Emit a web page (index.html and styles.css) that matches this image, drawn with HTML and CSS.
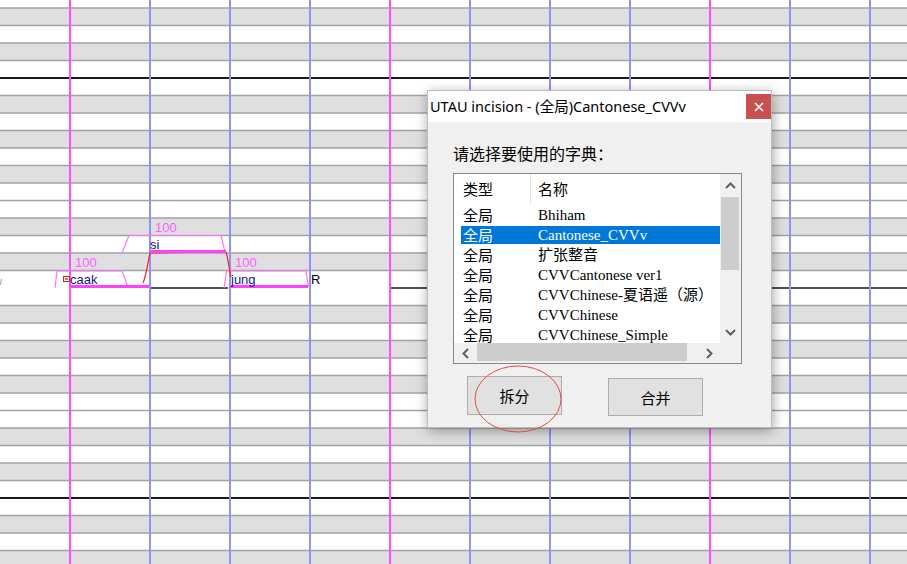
FILE: index.html
```
<!DOCTYPE html>
<html>
<head>
<meta charset="utf-8">
<link rel="stylesheet" href="styles.css">
</head>
<body>
<div class="desktop">
  <svg class="roll" width="907" height="564" viewBox="0 0 907 564">
    <rect x="0" y="0" width="907" height="564" fill="#ffffff"/>
    <g fill="#dfdfdf">
      <rect x="0" y="8" width="907" height="17.5"/>
      <rect x="0" y="43" width="907" height="17.5"/>
      <rect x="0" y="95.5" width="907" height="17.5"/>
      <rect x="0" y="130.5" width="907" height="17.5"/>
      <rect x="0" y="165.5" width="907" height="17.5"/>
      <rect x="0" y="218" width="907" height="17.5"/>
      <rect x="0" y="253" width="907" height="17.5"/>
      <rect x="0" y="305.5" width="907" height="17.5"/>
      <rect x="0" y="340.5" width="907" height="17.5"/>
      <rect x="0" y="375.5" width="907" height="17.5"/>
      <rect x="0" y="428" width="907" height="17.5"/>
      <rect x="0" y="463" width="907" height="17.5"/>
      <rect x="0" y="515.5" width="907" height="17.5"/>
      <rect x="0" y="550.5" width="907" height="17.5"/>
    </g>
    <path stroke="#a2a2a2" stroke-width="1.5" fill="none" d="M0 8H907M0 25.5H907M0 43H907M0 60.5H907M0 95.5H907M0 113H907M0 130.5H907M0 148H907M0 165.5H907M0 183H907M0 200.5H907M0 218H907M0 235.5H907M0 253H907M0 270.5H907M0 305.5H907M0 323H907M0 340.5H907M0 358H907M0 375.5H907M0 393H907M0 410.5H907M0 428H907M0 445.5H907M0 463H907M0 480.5H907M0 515.5H907M0 533H907M0 550.5H907"/>
    <path stroke="#1a1a1a" stroke-width="2" fill="none" d="M0 78H907M0 498H907"/>
    <path stroke="#1a1a1a" stroke-width="1.5" fill="none" d="M149 288H228M390 288H907"/>
    <g fill="#9090ff">
      <rect x="149" y="0" width="2" height="564"/>
      <rect x="229" y="0" width="2" height="564"/>
      <rect x="309" y="0" width="2" height="564"/>
      <rect x="469" y="0" width="2" height="564"/>
      <rect x="549" y="0" width="2" height="564"/>
      <rect x="629" y="0" width="2" height="564"/>
      <rect x="789" y="0" width="2" height="564"/>
      <rect x="869" y="0" width="2" height="564"/>
    </g>
    <g fill="#ff50ff">
      <rect x="69" y="0" width="2" height="564"/>
      <rect x="389" y="0" width="2" height="564"/>
      <rect x="709" y="0" width="2" height="564"/>
    </g>
    <path stroke="#9a9a9a" stroke-width="1" fill="none" d="M1.5 279L0.5 285"/>

    <g fill="none" stroke="#ff70ff" stroke-width="1.2">
      <polyline points="55,288 57,271 122,271 128,287"/>
      <polyline points="122,253 129,235.5 221,235.5 225,252"/>
      <polyline points="224,288 226.5,271 306,271 308.5,287"/>
    </g>
    <path d="M143 283 C146 276 148 262 150 253 L226 252 C228 258 229 268 231 277" stroke="#f02020" stroke-width="1.2" fill="none"/>
    <g fill="#ff40ff">
      <rect x="70" y="285" width="79" height="3"/>
      <rect x="150" y="250" width="76" height="3"/>
      <rect x="230" y="285" width="78" height="3"/>
    </g>
    <g class="vel">
      <text x="75" y="267">100</text>
      <text x="155" y="232">100</text>
      <text x="235" y="267">100</text>
    </g>
    <rect x="63.5" y="276.5" width="6" height="5" fill="none" stroke="#e02020" stroke-width="1"/>
    <rect x="65" y="278" width="3" height="2" fill="#ff6060"/>
    <g class="lyric">
      <text x="70" y="283.5">caak</text>
      <text x="150" y="248.5">si</text>
      <text x="231" y="283.5">jung</text>
    </g>
    <text class="rest" x="311" y="283.5">R</text>
  </svg>

  <div class="dialog">
    <div class="titlebar">
      <span class="title">UTAU incision - (全局)Cantonese_CVVv</span>
      <div class="close">
        <svg width="10" height="10" viewBox="0 0 10 10"><path d="M1 1L9 9M9 1L1 9" stroke="#fff" stroke-width="1.6"/></svg>
      </div>
    </div>
    <div class="body">
      <div class="prompt">请选择要使用的字典：</div>
      <div class="list">
        <div class="view">
          <div class="head"><span class="c1">类型</span><span class="c2">名称</span></div>
          <div class="item"><span class="c1">全局</span><span class="c2">Bhiham</span></div>
          <div class="item sel"><span class="c1">全局</span><span class="c2">Cantonese_CVVv</span></div>
          <div class="item"><span class="c1">全局</span><span class="c2">扩张整音</span></div>
          <div class="item"><span class="c1">全局</span><span class="c2">CVVCantonese ver1</span></div>
          <div class="item"><span class="c1">全局</span><span class="c2">CVVChinese-夏语遥（源）</span></div>
          <div class="item"><span class="c1">全局</span><span class="c2">CVVChinese</span></div>
          <div class="item"><span class="c1">全局</span><span class="c2">CVVChinese_Simple</span></div>
        </div>
        <div class="vscroll">
          <div class="arrow"><svg width="11" height="7" viewBox="0 0 11 7"><path d="M1 6L5.5 1.5L10 6" stroke="#606060" stroke-width="2" fill="none"/></svg></div>
          <div class="vthumb"></div>
          <div class="fill"></div>
          <div class="arrow"><svg width="11" height="7" viewBox="0 0 11 7"><path d="M1 1L5.5 5.5L10 1" stroke="#606060" stroke-width="2" fill="none"/></svg></div>
        </div>
        <div class="hscroll">
          <div class="harrow left"><svg width="7" height="11" viewBox="0 0 7 11"><path d="M6 1L1.5 5.5L6 10" stroke="#606060" stroke-width="2" fill="none"/></svg></div>
          <div class="hthumb"></div>
          <div class="fill"></div>
          <div class="harrow right"><svg width="7" height="11" viewBox="0 0 7 11"><path d="M1 1L5.5 5.5L1 10" stroke="#606060" stroke-width="2" fill="none"/></svg></div>
        </div>
        <div class="corner"></div>
      </div>
      <div class="buttons">
        <div class="btn">拆分</div>
        <div class="btn second">合并</div>
      </div>
    </div>
  </div>

  <svg class="circle" width="90" height="70" viewBox="0 0 90 70">
    <ellipse cx="44" cy="34" rx="43" ry="33" fill="none" stroke="#e84848" stroke-width="1"/>
  </svg>
</div>
</body>
</html>
```
FILE: styles.css
```
body {
  margin: 0;
}

.desktop {
  position: relative;
  width: 907px;
  height: 564px;
  overflow: hidden;
  background: #fff;
}

.roll {
  display: block;
}

.roll text {
  font-family: "Liberation Sans", Arial, sans-serif;
  font-size: 13px;
}

.roll .vel text {
  fill: #ff5cff;
}

.roll .lyric text {
  fill: #16168c;
}

.roll .rest {
  fill: #000;
}

.dialog {
  position: absolute;
  left: 427px;
  top: 90px;
  width: 345px;
  height: 338px;
  box-sizing: border-box;
  border: 1px solid #bcbcbc;
  background: #f0f0f0;
  box-shadow: 1px 3px 12px rgba(0, 0, 0, 0.35);
  display: flex;
  flex-direction: column;
}

.titlebar {
  height: 31px;
  flex: none;
  background: #fff;
  display: flex;
  justify-content: space-between;
  align-items: flex-start;
}

.title {
  padding-left: 2px;
  line-height: 31px;
  font-family: "Noto Sans", "Noto Sans CJK SC", sans-serif;
  font-size: 14.5px;
  color: #000;
  white-space: nowrap;
}

.close {
  width: 25px;
  height: 25px;
  margin-top: 3px;
  background: #c75050;
  display: flex;
  align-items: center;
  justify-content: center;
}

.close svg {
  display: block;
}

.body {
  flex: 1;
  padding: 21px 0 0 25px;
}

.prompt {
  height: 20px;
  line-height: 20px;
  font-family: "Noto Sans CJK SC", sans-serif;
  font-size: 16px;
  color: #000;
}

.list {
  margin-top: 10px;
  width: 289px;
  height: 191px;
  box-sizing: border-box;
  border: 1px solid #828790;
  background: #fff;
  display: grid;
  grid-template-columns: 1fr 21px;
  grid-template-rows: 1fr 20px;
}

.view {
  overflow: hidden;
  font-family: "Liberation Serif", "Noto Sans CJK SC", serif;
  font-size: 15px;
  color: #000;
}

.head {
  height: 30px;
  display: flex;
  align-items: stretch;
}

.head .c1 {
  width: 77px;
  box-sizing: border-box;
  padding-left: 9px;
  border-right: 1px solid #e5e5e5;
  line-height: 30px;
  font-family: "Noto Sans CJK SC", sans-serif;
}

.head .c2 {
  padding-left: 7px;
  line-height: 30px;
  font-family: "Noto Sans CJK SC", sans-serif;
}

.item {
  height: 20px;
  box-sizing: border-box;
  border-top: 1px solid transparent;
  margin-left: 7px;
  display: flex;
  align-items: center;
  background-clip: padding-box;
  line-height: 18px;
  white-space: nowrap;
}

.item.sel {
  margin-top: 1px;
}

.item .c1 {
  width: 77px;
  flex: none;
  box-sizing: border-box;
  padding-left: 2px;
  font-family: "Noto Sans CJK SC", sans-serif;
}

.item.sel {
  background-color: #0078d7;
  color: #fff;
  height: 19px;
}

.vscroll {
  background: #f0f0f0;
  display: flex;
  flex-direction: column;
}

.arrow {
  height: 22px;
  flex: none;
  display: flex;
  align-items: center;
  justify-content: center;
}

.arrow svg,
.harrow svg {
  display: block;
}

.vthumb {
  margin: 1px 2px 0 1px;
  height: 73px;
  flex: none;
  background: #cdcdcd;
}

.fill {
  flex: 1;
}

.hscroll {
  background: #f0f0f0;
  display: flex;
  align-items: flex-start;
}

.harrow {
  height: 20px;
  display: flex;
  align-items: center;
  justify-content: center;
  flex: none;
}

.harrow.left {
  width: 23px;
}

.harrow.right {
  width: 21px;
}

.hthumb {
  width: 210px;
  height: 18px;
  flex: none;
  background: #cdcdcd;
}

.corner {
  background: #f0f0f0;
}

.buttons {
  display: flex;
  align-items: flex-start;
  gap: 46px;
  margin-top: 12px;
  padding-left: 14px;
}

.btn {
  width: 95px;
  height: 39px;
  box-sizing: border-box;
  border: 1px solid #adadad;
  background: #e1e1e1;
  display: flex;
  align-items: center;
  justify-content: center;
  font-family: "Noto Sans CJK SC", sans-serif;
  font-size: 15px;
  color: #000;
}

.btn.second {
  margin-top: 2px;
  height: 38px;
}

.circle {
  position: absolute;
  left: 474px;
  top: 365px;
}
```
